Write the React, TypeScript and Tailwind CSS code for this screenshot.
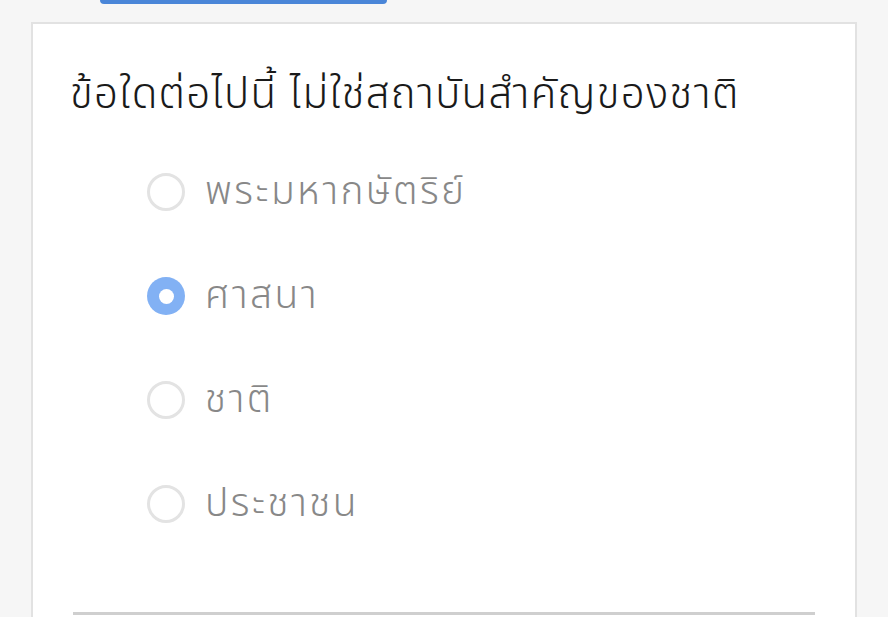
const options = [
  { id: "a", label: "พระมหากษัตริย์" },
  { id: "b", label: "ศาสนา" },
  { id: "c", label: "ชาติ" },
  { id: "d", label: "ประชาชน" },
];

function Radio({ checked }: { checked: boolean }) {
  if (checked) {
    return (
      <span className="flex h-[38px] w-[38px] shrink-0 items-center justify-center rounded-full bg-[#82b1f4]">
        <span className="h-[15px] w-[15px] rounded-full bg-white" />
      </span>
    );
  }
  return (
    <span className="block h-[38px] w-[38px] shrink-0 rounded-full border-[3px] border-[#e3e3e3] bg-white" />
  );
}

export default function App() {
  const selected = "b";
  return (
    <div className="h-[617px] w-[888px] overflow-hidden bg-[#f6f6f6] font-['Noto_Sans_Thai','Noto_Sans',sans-serif]">
      {/* previous section: bottom of a blue button */}
      <div className="ml-[100px] h-[4px] w-[287px] rounded-b-md bg-[#4a86d8]" />
      <div className="h-[18px]" />

      <div className="mx-[31px] h-[600px] border-x-2 border-t-2 border-[#e2e2e2] bg-white px-[40px] pt-[46px]">
        <h2 className="-ml-[3px] text-[42px] font-[350] leading-[50px] tracking-[1.3px] text-[#1a1a1a]">
          ข้อใดต่อไปนี้ ไม่ใช่สถาบันสำคัญของชาติ
        </h2>

        <div className="mt-[20px] flex flex-col pl-[74px]">
          {options.map((o) => (
            <label key={o.id} className="flex h-[104px] items-center gap-[20px]">
              <Radio checked={o.id === selected} />
              <span className="text-[39px] font-[350] leading-none tracking-[2.4px] text-[#888]">
                {o.label}
              </span>
            </label>
          ))}
        </div>

        <div className="mt-[56px] h-[3px] bg-[#cfcfcf]" />
      </div>
    </div>
  );
}
